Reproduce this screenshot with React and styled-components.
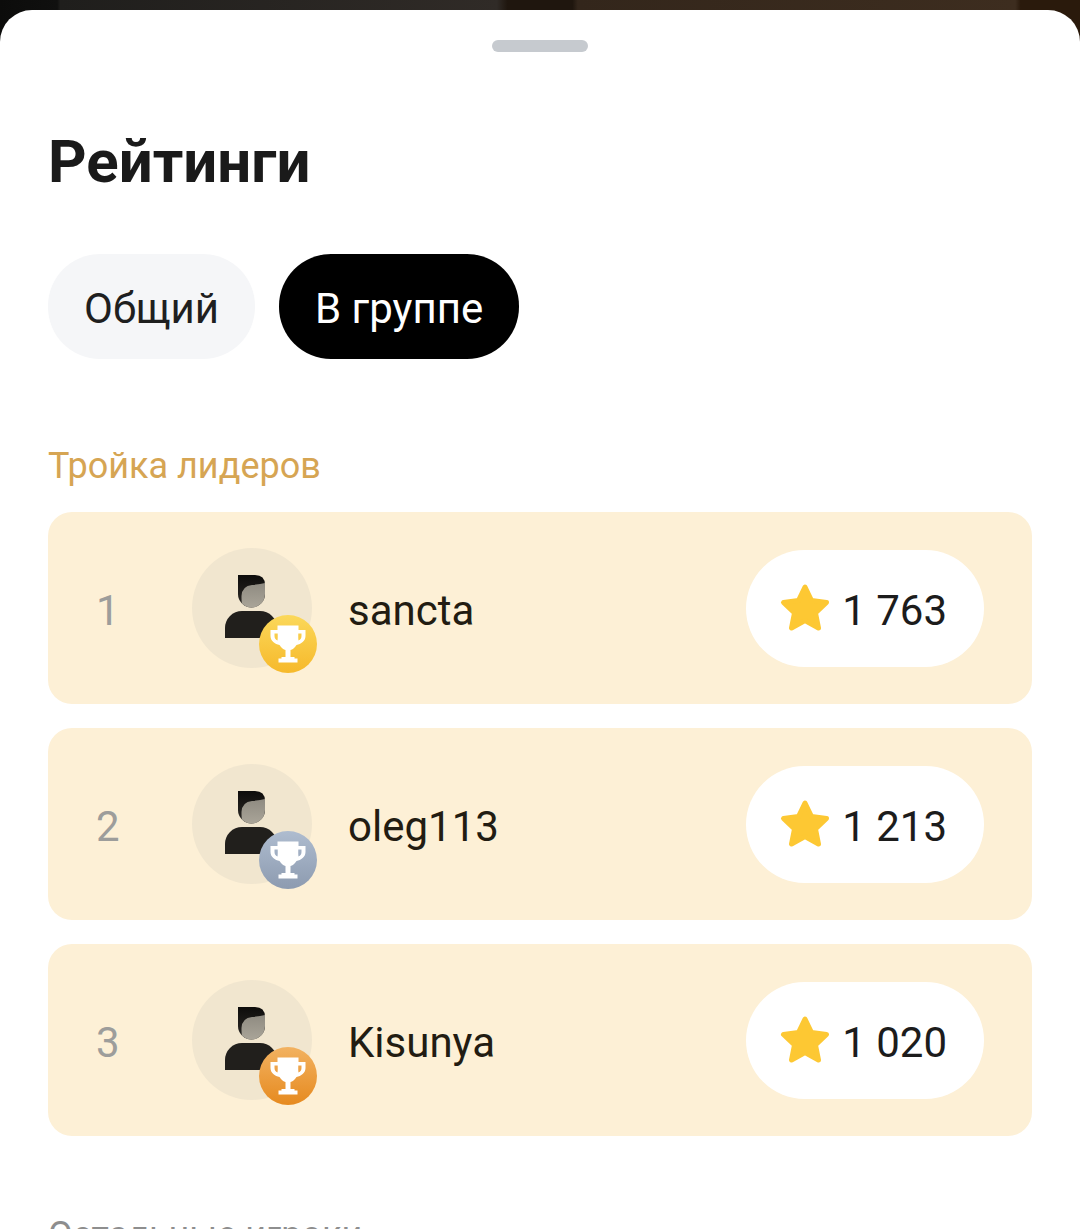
import styled, { createGlobalStyle } from "styled-components";

const leaders = [
  { rank: 1, name: "sancta", score: "1 763", medal: "gold" },
  { rank: 2, name: "oleg113", score: "1 213", medal: "silver" },
  { rank: 3, name: "Kisunya", score: "1 020", medal: "bronze" },
];

const medalColors = {
  gold: "linear-gradient(180deg, #fbd85a 0%, #f6b92b 100%)",
  silver: "linear-gradient(180deg, #aebccf 0%, #8d9bb0 100%)",
  bronze: "linear-gradient(180deg, #f2b261 0%, #e68a1f 100%)",
};

function PersonIcon({ id }) {
  return (
    <svg width="120" height="120" viewBox="0 0 120 120">
      <defs>
        <linearGradient id={`hair-${id}`} x1="0" y1="0" x2="0" y2="1">
          <stop offset="0" stopColor="#0d0c0b" />
          <stop offset="1" stopColor="#2f2c28" />
        </linearGradient>
        <linearGradient id={`face-${id}`} x1="0" y1="0" x2="0" y2="1">
          <stop offset="0" stopColor="#8f8b81" />
          <stop offset="1" stopColor="#a9a498" />
        </linearGradient>
      </defs>
      <path
        d="M46 27H63Q73 27 73 37V46A13.5 13.5 0 0 1 46 46Z"
        fill={`url(#hair-${id})`}
      />
      <path
        d="M73 35V46A13.5 13.5 0 0 1 50 55.5Q49.5 53 49.5 50V48Q50 38 60 37Q68 36.500 73 35Z"
        fill={`url(#face-${id})`}
      />
      <path
        d="M33 90V80A17 17 0 0 1 50 63H68A17 17 0 0 1 85 80V90Z"
        fill="#211f1c"
      />
    </svg>
  );
}

function TrophyIcon() {
  return (
    <svg width="58" height="58" viewBox="0 0 58 58">
      <path
        fillRule="evenodd"
        d="M18.500 10.500H39.500V15H46.500V21C46.500 26 42 29 37.500 30C35.500 33 33.500 34.500 31.500 35V42H35.500V43.500H38.500V47.500H19.500V43.500H22.500V42H26.500V35C24.500 34.500 22.500 33 20.500 30C16 29 11.500 26 11.500 21V15H18.500ZM15.500 18.500V21C15.500 23 16.500 24.500 18.500 25.500C18.800 23.500 18.800 21 18.700 18.500ZM42.500 18.500H39.300C39.200 21 39.200 23.500 39.500 25.500C41.500 24.500 42.500 23 42.500 21Z"
        fill="#fff"
      />
    </svg>
  );
}

function StarIcon() {
  return (
    <svg width="52" height="50" viewBox="0 0 52 50">
      <path
        d="M26 4L32.500 17.500L47.500 19.500L36.500 30L39.500 45L26 37.500L12.500 45L15.500 30L4.500 19.500L19.500 17.500Z"
        fill="#fdc833"
        stroke="#fdc833"
        strokeWidth="5"
        strokeLinejoin="round"
      />
    </svg>
  );
}

export default function App() {
  return (
    <>
      <GlobalStyle />
      <Backdrop>
        <Sheet>
          <Handle />
          <Title>Рейтинги</Title>
          <Tabs>
            <Tab>Общий</Tab>
            <Tab $active>В группе</Tab>
          </Tabs>
          <SectionTitle>Тройка лидеров</SectionTitle>
          <List>
            {leaders.map((item) => (
              <Row key={item.rank}>
                <Rank>{item.rank}</Rank>
                <Avatar>
                  <PersonIcon id={item.rank} />
                  <Medal $medal={item.medal}>
                    <TrophyIcon />
                  </Medal>
                </Avatar>
                <Name>{item.name}</Name>
                <Score>
                  <StarIcon />
                  <ScoreValue>{item.score}</ScoreValue>
                </Score>
              </Row>
            ))}
          </List>
          <SectionTitle $muted>Остальные игроки</SectionTitle>
        </Sheet>
      </Backdrop>
    </>
  );
}

const GlobalStyle = createGlobalStyle`
  html, body {
    margin: 0;
    height: 1229px;
    overflow: hidden;
    background: #ffffff;
  }
  * {
    box-sizing: border-box;
  }
`;

const Backdrop = styled.div`
  height: 1229px;
  padding-top: 10px;
  overflow: hidden;
  background: linear-gradient(
      90deg,
      #0c0c0b 0%,
      #10100f 5.3%,
      #1f1e1c 5.6%,
      #302b27 46%,
      #1f160e 47%,
      #1f160e 53%,
      #33261b 53.5%,
      #3d2d1f 94%,
      #2a1a0c 94.500%,
      #2a1a0c 100%
    )
    top / 100% 60px no-repeat;
  font-family: Roboto, "Noto Sans", sans-serif;
`;

const Sheet = styled.div`
  height: 1219px;
  padding: 30px 48px 0;
  background: #ffffff;
  border-radius: 32px 32px 0 0;
`;

const Handle = styled.div`
  width: 96px;
  height: 12px;
  margin: 0 auto;
  background: #c6cacf;
  border-radius: 6px;
`;

const Title = styled.h1`
  margin: 74px 0 0;
  font-size: 60px;
  line-height: 72px;
  font-weight: 700;
  color: #1a1a1a;
`;

const Tabs = styled.div`
  display: flex;
  gap: 24px;
  margin-top: 56px;
`;

const Tab = styled.div`
  display: flex;
  align-items: center;
  height: 105px;
  padding: 3px 36px 0;
  border-radius: 52px;
  font-size: 42px;
  background: ${(p) => (p.$active ? "#000000" : "#f5f6f8")};
  color: ${(p) => (p.$active ? "#ffffff" : "#1f1f1f")};
`;

const SectionTitle = styled.h2`
  margin: ${(p) => (p.$muted ? "76px" : "84px")} 0 0;
  font-size: 36px;
  line-height: 46px;
  font-weight: 400;
  color: ${(p) => (p.$muted ? "#8e8e8e" : "#d6a553")};
`;

const List = styled.div`
  display: flex;
  flex-direction: column;
  gap: 24px;
  margin-top: 23px;
`;

const Row = styled.div`
  display: flex;
  align-items: center;
  height: 192px;
  padding: 0 48px;
  background: #fdf0d6;
  border-radius: 24px;
`;

const Rank = styled.div`
  width: 96px;
  padding-top: 5px;
  font-size: 42px;
  color: #9d9d9b;
`;

const Avatar = styled.div`
  position: relative;
  flex: none;
  width: 120px;
  height: 120px;
  background: #f1e6cf;
  border-radius: 50%;
`;

const Medal = styled.div`
  position: absolute;
  left: 67px;
  top: 67px;
  width: 58px;
  height: 58px;
  border-radius: 50%;
  background: ${(p) => medalColors[p.$medal]};
`;

const Name = styled.div`
  flex: 1;
  margin-left: 36px;
  padding-top: 5px;
  font-size: 42px;
  color: #221c12;
`;

const Score = styled.div`
  display: flex;
  align-items: center;
  gap: 11px;
  height: 117px;
  padding: 0 37px 0 33px;
  background: #ffffff;
  border-radius: 59px;
`;

const ScoreValue = styled.span`
  padding-top: 5px;
  font-size: 42px;
  color: #1c1c1c;
`;
